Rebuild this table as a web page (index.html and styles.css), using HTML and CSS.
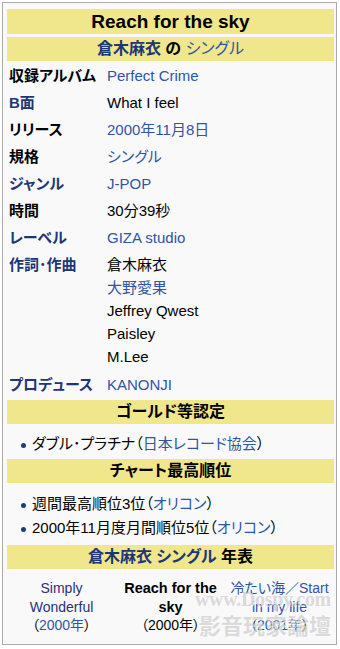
FILE: index.html
```html
<!DOCTYPE html>
<html lang="ja">
<head>
<meta charset="utf-8">
<title>Reach for the sky</title>
<link rel="stylesheet" href="styles.css">
</head>
<body>
<div class="infobox">
  <div class="head title">Reach for the sky</div>
  <div class="head sub"><span class="nav">倉木麻衣</span> の <span class="lnk thin">シングル</span></div>

  <div class="lab">収録アルバム</div><div class="val"><span class="lnk">Perfect Crime</span></div>
  <div class="lab nav">B面</div><div class="val">What I feel</div>
  <div class="lab">リリース</div><div class="val"><span class="lnk">2000年11月8日</span></div>
  <div class="lab">規格</div><div class="val"><span class="lnk">シングル</span></div>
  <div class="lab nav">ジャンル</div><div class="val"><span class="lnk">J-POP</span></div>
  <div class="lab">時間</div><div class="val">30分39秒</div>
  <div class="lab nav">レーベル</div><div class="val"><span class="lnk">GIZA studio</span></div>
  <div class="lab nav">作詞･作曲</div>
  <div class="val multi">
    <div>倉木麻衣</div>
    <div class="lnk">大野愛果</div>
    <div>Jeffrey Qwest</div>
    <div>Paisley</div>
    <div>M.Lee</div>
  </div>
  <div class="lab nav">プロデュース</div><div class="val"><span class="lnk">KANONJI</span></div>

  <div class="head sect">ゴールド等認定</div>
  <ul class="list gold">
    <li>ダブル･プラチナ（<span class="lnk">日本レコード協会</span>）</li>
  </ul>

  <div class="head sect">チャート最高順位</div>
  <ul class="list chart">
    <li>週間最高順位3位（<span class="lnk">オリコン</span>）</li>
    <li>2000年11月度月間順位5位（<span class="lnk">オリコン</span>）</li>
  </ul>

  <div class="head sect"><span class="nav">倉木麻衣</span> <span class="nav">シングル</span> 年表</div>
  <div class="chron">
    <div class="cell"><span class="nav2">Simply Wonderful</span><br>（<span class="lnk">2000年</span>）</div>
    <div class="cell"><b>Reach for the sky</b><br>（2000年）</div>
    <div class="cell"><span class="lnk">冷たい海／Start in my life</span><br>（<span class="lnk">2001年</span>）</div>
  </div>

  <div class="watermark"><div class="wm1">www.Dospy.com</div><div class="wm2">影音玩家論壇</div></div>
</div>
</body>
</html>
```

FILE: styles.css
```css
html, body {
  margin: 0;
  padding: 0;
  background: #ffffff;
}

body {
  font-family: "Liberation Sans", "Noto Sans CJK JP", sans-serif;
  font-feature-settings: "palt";
  font-size: 15px;
  color: #000;
}

.infobox {
  position: relative;
  box-sizing: border-box;
  width: 335px;
  height: 643px;
  margin: 2px 0 0 2px;
  border: 1px solid #aaaaaa;
  background: #f9f9f9;
  padding: 6px 2px 4px 4px;
  display: grid;
  grid-template-columns: 96px 1fr;
  column-gap: 3px;
  row-gap: 3px;
  align-content: start;
  overflow: hidden;
}

.head {
  grid-column: 1 / -1;
  background: #f0e68c;
  text-align: center;
  font-weight: bold;
  font-size: 16px;
  line-height: 24px;
  height: 24px;
}

.title {
  font-size: 19px;
  height: 25px;
  line-height: 25px;
}

.lab {
  font-weight: bold;
  line-height: 24px;
  padding-left: 2px;
  white-space: nowrap;
}

.val {
  line-height: 24px;
  padding-left: 1px;
}

.multi {
  line-height: 23px;
  padding-bottom: 2px;
}

.nav {
  color: #1c3678;
}

.nav2 {
  color: #2a2f80;
}

.lnk {
  color: #2e55a4;
}

.thin {
  font-weight: normal;
}

.list {
  grid-column: 1 / -1;
  margin: 0;
  padding: 0 0 0 25px;
  list-style: none;
  line-height: 24px;
}

.list li {
  position: relative;
}

.list li::before {
  content: "";
  position: absolute;
  left: -11px;
  top: 11px;
  width: 5px;
  height: 5px;
  border-radius: 50%;
  background: #1d3f6e;
}

.gold {
  padding-top: 5px;
  height: 24px;
}

.chart {
  padding-top: 6px;
  padding-bottom: 2px;
}

.chron {
  grid-column: 1 / -1;
  display: grid;
  grid-template-columns: 1fr 1fr 1fr;
  padding-top: 7px;
  font-size: 14px;
  line-height: 18.5px;
  text-align: center;
}

.chron b {
  font-weight: bold;
  font-size: 14.5px;
}

.watermark {
  position: absolute;
  left: 176px;
  top: 585px;
  width: 152px;
  text-align: right;
  white-space: nowrap;
  font-weight: bold;
  color: rgba(185, 185, 185, 0.5);
  text-shadow: 1px 1px 0 rgba(255, 255, 255, 0.6);
  pointer-events: none;
}

.wm1 {
  font-family: "Liberation Serif", serif;
  font-size: 20px;
  line-height: 22px;
  letter-spacing: -0.3px;
}

.wm2 {
  font-family: "Noto Sans CJK TC", sans-serif;
  font-size: 22px;
  line-height: 28px;
  letter-spacing: 0px;
}
```
